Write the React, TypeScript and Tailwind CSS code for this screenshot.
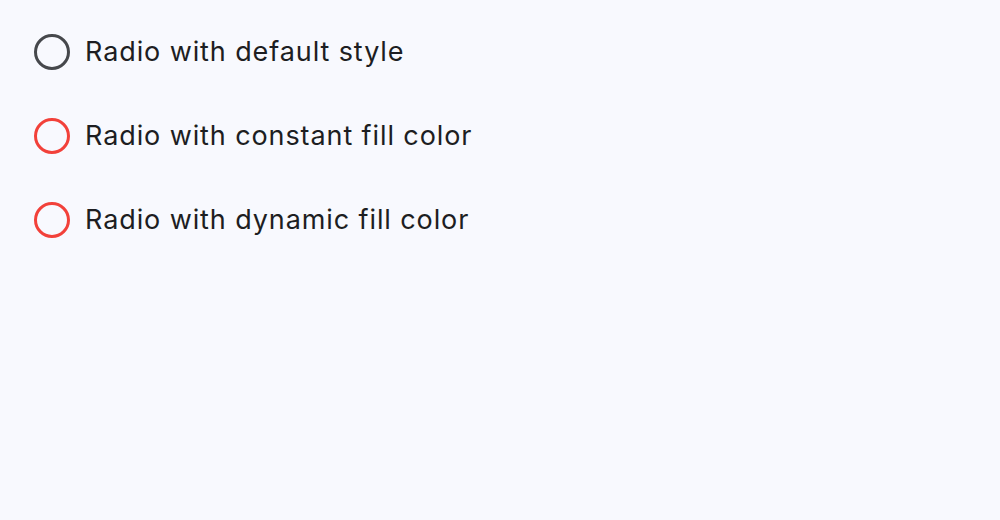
import React from 'react';

const rows = [
  { label: 'Radio with default style', ring: 'border-[#46484c]' },
  { label: 'Radio with constant fill color', ring: 'border-[#f2413a]' },
  { label: 'Radio with dynamic fill color', ring: 'border-[#f2413a]' },
];

export default function App() {
  return (
    <div className="min-h-screen w-full bg-[#f8f9fe] px-[34px] pt-[34px] font-['Inter',sans-serif]">
      <div className="flex flex-col gap-[48px]">
        {rows.map((r) => (
          <label key={r.label} className="flex items-center gap-[15px] cursor-pointer">
            <span className={`box-border h-[36px] w-[36px] shrink-0 rounded-full border-[3.5px] ${r.ring}`} />
            <span className="text-[27px] leading-[36px] tracking-[0.9px] text-[#1d1e22]">{r.label}</span>
          </label>
        ))}
      </div>
    </div>
  );
}
